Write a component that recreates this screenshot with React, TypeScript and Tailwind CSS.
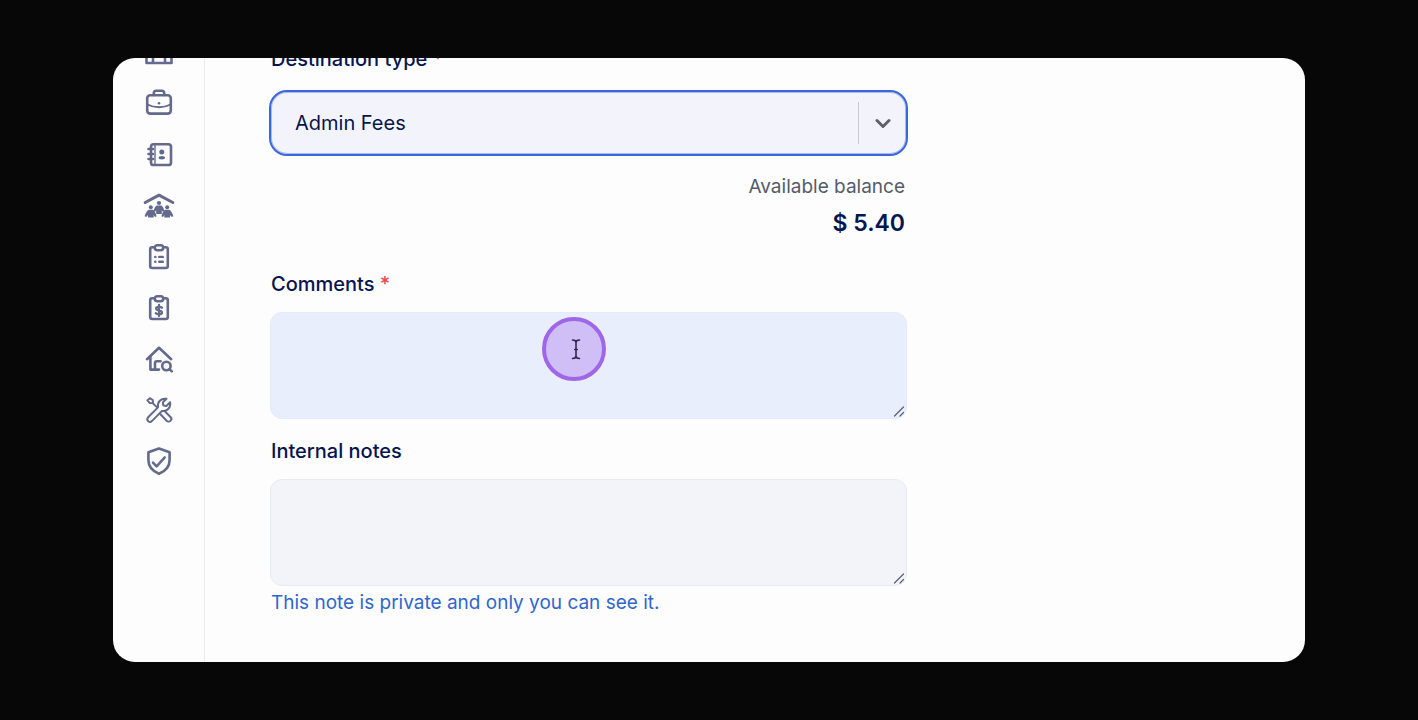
import type { ReactNode } from "react";

type NavItem = { label: string; icon: ReactNode };

const clipboard = (
  <>
    <path d="M11 7.200H9.200a2 2 0 0 0-2 2v16.800a2 2 0 0 0 2 2h13.600a2 2 0 0 0 2-2V9.200a2 2 0 0 0-2-2H21" />
    <rect x="11.800" y="5.200" width="8.400" height="5" rx="2.400" />
  </>
);

const navItems: NavItem[] = [
  {
    label: "Properties",
    icon: <path d="M3.500 27V8h25v19zM10 27V15h12v12" />,
  },
  {
    label: "Portfolio",
    icon: (
      <>
        <rect x="4.200" y="8.200" width="23.600" height="18.400" rx="3" />
        <path d="M10.800 8V6.200a2.400 2.400 0 0 1 2.400-2.400h5.600a2.400 2.400 0 0 1 2.400 2.400V8" />
        <path d="M4.500 17.500c6.500 3.600 16.500 3.600 23 0" strokeWidth="2" />
        <circle cx="16" cy="16.200" r="1.300" fill="currentColor" stroke="none" />
      </>
    ),
  },
  {
    label: "Contacts",
    icon: (
      <>
        <rect x="8" y="6.200" width="20" height="20.800" rx="2.600" />
        <path d="M12 6.500v20" strokeWidth="1.400" />
        <path d="M5.500 11h4.500M5.500 16h4.500M5.500 21h4.500" strokeWidth="2.600" />
        <circle cx="18.800" cy="14" r="2.500" fill="currentColor" stroke="none" />
        <ellipse cx="18.800" cy="19.700" rx="3.200" ry="1.700" fill="currentColor" stroke="none" />
      </>
    ),
  },
  {
    label: "Tenants",
    icon: (
      <>
        <path d="M2.200 13.500L16 6.200l13.800 7.300" strokeWidth="3" />
        <g fill="currentColor" stroke="none">
          <circle cx="16" cy="14" r="2.100" />
          <circle cx="7.800" cy="18.300" r="2" />
          <circle cx="24.200" cy="18.300" r="2" />
          <path d="M13.800 16.500h4.400c1.400.6 2.700 3 3.200 5.500l-1.700.8-.9-1.500V25h-5.600v-3.700l-.9 1.500-1.700-.8c.5-2.500 1.800-4.900 3.200-5.500z" />
          <path d="M5.600 20.700h4.400c1.500.7 3 3.600 3.600 6.600l-1.700.8-1.200-2v2.300H5v-2.300l-1.700 2-1.700-.8c.8-3 2.500-5.900 4-6.600z" />
          <path d="M22 20.700h4.400c1.500.7 3.200 3.600 4 6.600l-1.700.8-1.700-2v2.300h-5.700v-2.300l-1.200 2-1.700-.8c.6-3 2.100-5.900 3.600-6.600z" />
        </g>
      </>
    ),
  },
  {
    label: "Tasks",
    icon: (
      <>
        {clipboard}
        <path d="M12.200 16.900h.2M16.200 16.900h3.600M12.200 21.700h.2M16.200 21.700h3.600" strokeWidth="2.400" />
      </>
    ),
  },
  {
    label: "Payments",
    icon: (
      <>
        {clipboard}
        <path d="M16 13.800v11.200M19 16.700c-1-1.200-5.900-1.500-5.900.9 0 2.700 5.900 1.200 5.900 3.800 0 2.400-5 2.100-6.200.8" strokeWidth="2.300" />
      </>
    ),
  },
  {
    label: "Listings",
    icon: (
      <>
        <path d="M4 17.200L16 5.800l12.200 11.400" />
        <path d="M7.400 15v12.600H16M12 27.600v-6.400a2 2 0 0 1 2-2h3.600" />
        <circle cx="23.400" cy="24" r="4.200" />
        <path d="M26.500 27.100l2.300 2.300" />
      </>
    ),
  },
  {
    label: "Maintenance",
    icon: (
      <g strokeWidth="2">
        <path d="M4.900 24.500l10.100-10.100c-1-5.200 3-9.500 8.500-8.600l-3.700 3.700.6 3 3 .5 3.700-3.700c1 5.400-3.300 9.600-8.100 8.600L8.900 28.100a2.700 2.700 0 0 1-4-3.600z" />
        <path d="M4.400 7.400l2.400-2.200 3 1.900.2 3.200-3.200-.3zM10 10.400l4 4" />
        <path d="M17.200 21l6.400 6.800a2.700 2.700 0 0 0 3.900-3.800l-5.700-5.700" />
      </g>
    ),
  },
  {
    label: "Insurance",
    icon: (
      <>
        <path d="M16 4.500l10.600 3.800v7.700c0 6.500-4.200 11.200-10.600 13.700C9.600 27.200 5.400 22.500 5.400 16V8.300z" />
        <path d="M10 18.700l3.600 3.600 8-8.800" />
      </>
    ),
  },
];

const labelClass = "pl-0.5 text-xl leading-[30px] font-medium text-[#06154f]";

function Sidebar() {
  return (
    <nav aria-label="Main" className="-mt-[22px] flex w-full flex-col items-center gap-[19px]">
      {navItems.map((item) => (
        <a key={item.label} href="#" aria-label={item.label} className="block text-[#646a8c]">
          <svg
            viewBox="0 0 32 32"
            className="size-8"
            fill="none"
            stroke="currentColor"
            strokeWidth="2.600"
            strokeLinecap="round"
            strokeLinejoin="round"
            aria-hidden="true"
          >
            {item.icon}
          </svg>
        </a>
      ))}
    </nav>
  );
}

function Pointer() {
  return (
    <div className="pointer-events-none absolute top-[5px] left-[273px] flex size-16 items-center justify-center rounded-full border-4 border-[#a066e8] bg-[#cfbff6]">
      <svg viewBox="0 0 12 22" className="ml-1 h-[22px] w-3" fill="none" stroke="#33264f" strokeWidth="1.600" strokeLinecap="round" aria-hidden="true">
        <path d="M2.500 2c2.300 0 3.500.8 3.500 2.500v13.500c0 1.700-1.200 2.500-3.500 2.500M9.500 2C7.200 2 6 2.800 6 4.500M9.500 20.500c-2.300 0-3.500-.8-3.500-2.500M4.800 11.500h2.400" />
      </svg>
    </div>
  );
}

function ResizeGrip() {
  return (
    <svg viewBox="0 0 12 12" className="pointer-events-none absolute right-[3px] bottom-px size-3" fill="none" stroke="#5c5f69" strokeWidth="1.200" strokeLinecap="round" aria-hidden="true">
      <path d="M1.500 10l9-9M7 10l3.500-3.500" />
    </svg>
  );
}

export default function App() {
  return (
    <div className="flex h-screen bg-[#070707] px-[113px] py-[58px] font-[Inter,sans-serif]">
      <div className="flex flex-1 overflow-hidden rounded-[22px] bg-[#fdfdfe]">
        <aside className="w-[92px] shrink-0 border-r border-[#e9eaf6]">
          <Sidebar />
        </aside>
        <main className="flex-1 px-16">
          <form className="-mt-3.5 flex w-full max-w-[639px] flex-col">
            <label htmlFor="destination" className={labelClass}>
              Destination type <span className="text-[#e5484d]">*</span>
            </label>
            <div className="relative mt-4 flex">
              <select
                id="destination"
                className="h-[66px] w-full appearance-none rounded-[18px] border-2 border-[#3b66dc] bg-[#f3f4fb] px-6 text-xl text-[#06154f] inset-ring inset-ring-[#3b66dc]/40 outline-none"
              >
                <option>Admin Fees</option>
              </select>
              <div className="pointer-events-none absolute inset-y-3 right-[17px] flex items-center gap-4">
                <span className="h-full w-px bg-[#c8c9ce]" />
                <svg viewBox="0 0 16 16" className="size-4" fill="none" stroke="#606066" strokeWidth="3" strokeLinecap="round" strokeLinejoin="round" aria-hidden="true">
                  <path d="M2 5.500l6 6 6-6" />
                </svg>
              </div>
            </div>
            <div className="mt-4 flex flex-col items-end pr-[3px]">
              <span className="text-[19px] leading-[30px] text-[#545b68]">Available balance</span>
              <span className="mt-[3px] text-[23px] leading-9 font-semibold text-[#06154f]">$ 5.40</span>
            </div>
            <label htmlFor="comments" className={`mt-7 ${labelClass}`}>
              Comments <span className="text-[#e5484d]">*</span>
            </label>
            <div className="relative mt-[13px] flex px-px">
              <textarea id="comments" className="h-[107px] w-full resize-none rounded-xl border border-[#e4eafb] bg-[#e8eefc] p-4 text-xl outline-none" />
              <ResizeGrip />
              <Pointer />
            </div>
            <label htmlFor="notes" className={`mt-[17px] ${labelClass}`}>
              Internal notes
            </label>
            <div className="relative mt-[13px] flex px-px">
              <textarea id="notes" aria-describedby="notes-hint" className="h-[107px] w-full resize-none rounded-xl border border-[#e8e9f6] bg-[#f3f4fa] p-4 text-xl outline-none" />
              <ResizeGrip />
            </div>
            <p id="notes-hint" className="mt-0.5 pl-0.5 text-[19px] leading-[30px] text-[#2f66cc]">
              This note is private and only you can see it.
            </p>
          </form>
        </main>
      </div>
    </div>
  );
}
